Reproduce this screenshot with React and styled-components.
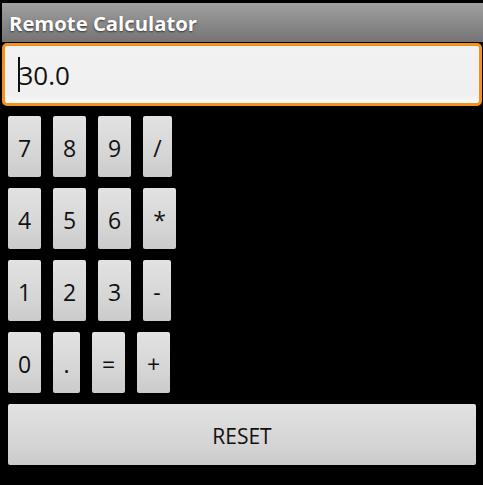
import React from 'react';
import styled, { createGlobalStyle } from 'styled-components';

const GlobalStyle = createGlobalStyle`
  html, body {
    margin: 0;
    padding: 0;
    background: #000;
  }
  body {
    font-family: "Open Sans", "DejaVu Sans", sans-serif;
  }
`;

const Screen = styled.div`
  width: 483px;
  height: 485px;
  background: #000;
  padding-top: 3px;
  box-sizing: border-box;
  overflow: hidden;
`;

const TitleBar = styled.div`
  margin-left: 2px;
  height: 39px;
  display: flex;
  align-items: center;
  padding-left: 7px;
  background: linear-gradient(#a0a0a0, #747474);
  color: #fff;
  font-weight: 700;
  font-size: 20.3px;
  text-shadow: 0 1px 2px rgba(0, 0, 0, 0.6);
`;

const Display = styled.div`
  margin: 1px 1px 0 2px;
  height: 63px;
  box-sizing: border-box;
  border: 3px solid #f5901e;
  border-radius: 5px;
  background: linear-gradient(#f2f2f2, #f0f0f0 85%, #fafafa);
  display: flex;
  align-items: center;
  padding-left: 13px;
  font-size: 26px;
  color: #111;
`;

const Caret = styled.span`
  display: inline-block;
  width: 1.5px;
  height: 35px;
  background: #111;
  margin-right: -1px;
`;

const Keypad = styled.div`
  display: flex;
  flex-direction: column;
  gap: 11px;
  padding: 10px 7px 0 8px;
`;

const Row = styled.div`
  display: flex;
  gap: 12px;
  height: 61px;
`;

const Key = styled.button`
  width: ${p => (p.$w ? `${p.$w}px` : '100%')};
  height: 100%;
  padding: 0;
  border: none;
  border-radius: 2px;
  background: linear-gradient(#e2e2e2, #d6d6d6 60%, #cbcbcb);
  color: #111;
  font-family: "Open Sans", "DejaVu Sans", sans-serif;
  font-size: ${p => (p.$wide ? '21px' : '23px')};
  display: flex;
  align-items: center;
  justify-content: center;
  padding-top: 2px;
`;

const rows = [
  [['7', 33], ['8', 33], ['9', 33], ['/', 29]],
  [['4', 33], ['5', 33], ['6', 33], ['*', 33]],
  [['1', 33], ['2', 33], ['3', 33], ['-', 28]],
  [['0', 33], ['.', 27], ['=', 33], ['+', 33]],
];

const App = () => (
  <Screen>
    <GlobalStyle />
    <TitleBar>Remote Calculator</TitleBar>
    <Display>
      <Caret />
      30.0
    </Display>
    <Keypad>
      {rows.map((row, i) => (
        <Row key={i}>
          {row.map(([label, w]) => (
            <Key key={label} $w={w}>
              {label}
            </Key>
          ))}
        </Row>
      ))}
      <Row>
        <Key $wide>RESET</Key>
      </Row>
    </Keypad>
  </Screen>
);

export default App;
